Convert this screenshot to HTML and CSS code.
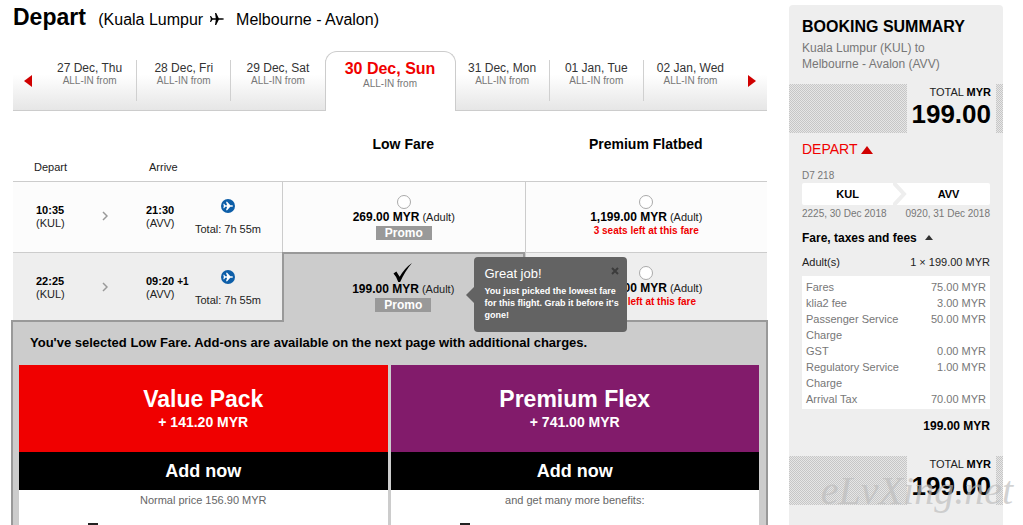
FILE: index.html
```
<!DOCTYPE html>
<html lang="en">
<head>
  <meta charset="UTF-8">
  <meta name="viewport" content="width=device-width, initial-scale=1.0">
  <title>Select flight</title>
  <link rel="stylesheet" href="styles.css">
</head>
<body>
  <svg class="defs" width="0" height="0">
    <symbol id="plane" viewBox="0 0 14 12">
      <path d="M0 3h1l1.500 2.300h3.300L5 0h1.200l2.600 5.300h3.400q1.800.2 1.800.7t-1.800.7H8.800L6.200 12H5l.8-5.300H2.500L1 9H0l.8-3z"/>
    </symbol>
    <symbol id="flight" viewBox="0 0 14 14">
      <circle cx="7" cy="7" r="7" fill="#0d5ea8"/>
      <path fill="#fff" d="M2.300 4.800h.9l1 1.400h1.900L5 2.800h1.200l3.100 3.400h1.500q1.300.2 1.300.8t-1.300.8H9.300l-3.100 3.400H5l1.100-3.400H4.200l-1 1.400h-.9L2.800 7z"/>
    </symbol>
    <symbol id="chevron" viewBox="0 0 6 10">
      <path d="M1 1l4 4-4 4" fill="none" stroke="#999" stroke-width="1.500"/>
    </symbol>
  </svg>

  <div class="page">
    <main class="flights">
      <h1 class="title">Depart
        <span class="route">(Kuala Lumpur <svg class="plane"><use href="#plane"/></svg> Melbourne - Avalon)</span>
      </h1>

      <!-- date tabs -->
      <nav class="dates">
        <button class="step" type="button" aria-label="Earlier"><svg width="8" height="12"><path d="M8 0v12L0 6z"/></svg></button>
        <a class="date" href="#">27 Dec, Thu<small>ALL-IN from</small></a>
        <a class="date" href="#">28 Dec, Fri<small>ALL-IN from</small></a>
        <a class="date" href="#">29 Dec, Sat<small>ALL-IN from</small></a>
        <a class="date active" href="#">30 Dec, Sun<small>ALL-IN from</small></a>
        <a class="date" href="#">31 Dec, Mon<small>ALL-IN from</small></a>
        <a class="date" href="#">01 Jan, Tue<small>ALL-IN from</small></a>
        <a class="date last" href="#">02 Jan, Wed<small>ALL-IN from</small></a>
        <button class="step" type="button" aria-label="Later"><svg width="8" height="12"><path d="M0 0v12l8-6z"/></svg></button>
      </nav>

      <table class="fares">
        <colgroup>
          <col class="col-depart"><col class="col-arrow"><col class="col-arrive"><col class="col-total"><col class="col-fare"><col class="col-fare">
        </colgroup>
        <thead>
          <tr>
            <th class="place">Depart</th>
            <th></th>
            <th class="place arrive">Arrive</th>
            <th></th>
            <th class="fare-name">Low Fare</th>
            <th class="fare-name">Premium Flatbed</th>
          </tr>
        </thead>
        <tbody>
          <tr>
            <td class="time"><b>10:35</b><br>(KUL)</td>
            <td class="arrow"><svg width="6" height="10"><use href="#chevron"/></svg></td>
            <td class="time"><b>21:30</b><br>(AVV)</td>
            <td class="total"><svg width="14" height="14"><use href="#flight"/></svg>Total: 7h 55m</td>
            <td class="fare">
              <label><input type="radio" name="fare"><span class="price"><b>269.00 MYR</b> (Adult)</span></label>
              <span class="promo">Promo</span>
            </td>
            <td class="fare">
              <label><input type="radio" name="fare"><span class="price"><b>1,199.00 MYR</b> (Adult)</span></label>
              <span class="seats">3 seats left at this fare</span>
            </td>
          </tr>
          <tr class="current">
            <td class="time"><b>22:25</b><br>(KUL)</td>
            <td class="arrow"><svg width="6" height="10"><use href="#chevron"/></svg></td>
            <td class="time"><b>09:20 <small>+1</small></b><br>(AVV)</td>
            <td class="total"><svg width="14" height="14"><use href="#flight"/></svg>Total: 7h 55m</td>
            <td class="fare selected">
              <label>
                <input type="radio" name="fare" checked>
                <svg class="tick" viewBox="0 0 20 20"><path d="M0 11l3-2 3.500 5.500Q12 5 19.500 0q-7 8-12.500 20H5Q3 14 0 11z"/></svg>
                <span class="price"><b>199.00 MYR</b> (Adult)</span>
              </label>
              <span class="promo">Promo</span>
              <div class="tip">
                <button class="close" type="button" aria-label="Close"><svg width="8" height="8"><path d="M1 1l6 6M7 1L1 7"/></svg></button>
                <strong>Great job!</strong>
                <p>You just picked the lowest fare for this flight. Grab it before it's gone!</p>
              </div>
            </td>
            <td class="fare">
              <label><input type="radio" name="fare"><span class="price"><b>1,199.00 MYR</b> (Adult)</span></label>
              <span class="seats">1 seat left at this fare</span>
            </td>
          </tr>
        </tbody>
      </table>

      <!-- add-ons -->
      <section class="addons">
        <p class="notice">You've selected Low Fare. Add-ons are available on the next page with additional charges.</p>
        <div class="packs">
          <article class="pack value">
            <header><h2>Value Pack</h2>+ 141.20 MYR</header>
            <button type="button">Add now</button>
            <p>Normal price 156.90 MYR</p>
            <svg class="bag" viewBox="0 0 24 24"><path d="M8 5V1h8v4M3 5h18v17H3z"/></svg>
          </article>
          <article class="pack flex">
            <header><h2>Premium Flex</h2>+ 741.00 MYR</header>
            <button type="button">Add now</button>
            <p>and get many more benefits:</p>
            <svg class="bag" viewBox="0 0 24 24"><path d="M8 5V1h8v4M3 5h18v17H3z"/></svg>
          </article>
        </div>
      </section>
    </main>

    <aside class="summary">
      <h2>BOOKING SUMMARY</h2>
      <p class="trip">Kuala Lumpur (KUL) to<br>Melbourne - Avalon (AVV)</p>
      <div class="band"><div class="sum">TOTAL <b>MYR</b><strong>199.00</strong></div></div>

      <div class="details">
        <h3 class="leg">DEPART <svg width="12" height="8"><path d="M6 0l6 8H0z"/></svg></h3>
        <p class="small">D7 218</p>
        <div class="stations">
          <span class="from">KUL</span>
          <svg width="14" height="22" viewBox="0 0 14 22"><path d="M0-1l11 12L0 23" fill="none" stroke="#eee" stroke-width="4"/></svg>
          <span class="to">AVV</span>
        </div>
        <p class="small line"><span>2225, 30 Dec 2018</span><span>0920, 31 Dec 2018</span></p>
        <h4>Fare, taxes and fees <svg width="8" height="5"><path d="M4 0l4 5H0z"/></svg></h4>
        <p class="line adults"><span>Adult(s)</span><span>1 × 199.00 MYR</span></p>
        <table class="fees">
          <tr><td>Fares</td><td>75.00 MYR</td></tr>
          <tr><td>klia2 fee</td><td>3.00 MYR</td></tr>
          <tr><td>Passenger Service Charge</td><td>50.00 MYR</td></tr>
          <tr><td>GST</td><td>0.00 MYR</td></tr>
          <tr><td>Regulatory Service Charge</td><td>1.00 MYR</td></tr>
          <tr><td>Arrival Tax</td><td>70.00 MYR</td></tr>
        </table>
        <p class="subtotal">199.00 MYR</p>
      </div>
      <div class="band"><div class="sum">TOTAL <b>MYR</b><strong>199.00</strong></div></div>
      <span class="watermark">eLvXing.net</span>
    </aside>
  </div>
</body>
</html>
```
FILE: styles.css
```
* {
  box-sizing: border-box;
}
body {
  margin: 0;
  background: #fff;
  color: #222;
  font: 11px/13px "Liberation Sans", Arial, sans-serif;
}
h1, h2, h3, h4, p {
  margin: 0;
}
button {
  border: 0;
  padding: 0;
  background: none;
  font-family: inherit;
  cursor: pointer;
}
.defs {
  position: absolute;
}

.page {
  display: flex;
  gap: 22px;
  height: 100vh;
  overflow: hidden;
  padding: 5px 20px 0 13px;
}
.flights {
  flex: 1;
  min-width: 0;
}

.title {
  height: 46px;
  color: #000;
  font-size: 23px;
  line-height: 24px;
}
.route {
  margin-left: 6px;
  font-size: 16px;
  font-weight: normal;
}
.plane {
  width: 14px;
  height: 12px;
  margin: 0 8px 0 2px;
}

/* date tabs */
.dates {
  display: flex;
  height: 60px;
  border-bottom: 1px solid #ccc;
  background: linear-gradient(#fff 40%, #e6e6e6);
}
.step {
  flex: none;
  width: 30px;
  padding-top: 4px;
  fill: #d00000;
}
.date {
  flex: 1;
  margin: 9px 0;
  border-right: 1px solid #d0d0d0;
  padding-top: 1px;
  color: #333;
  font-size: 12px;
  line-height: 14px;
  text-align: center;
  text-decoration: none;
}
.date small {
  display: block;
  color: #777;
  font-size: 10px;
  line-height: 11px;
}
.date.last {
  border-right: 0;
}
.date.active {
  flex: none;
  width: 131px;
  margin: 0 0 -1px -1px;
  border: 1px solid #ccc;
  border-bottom: 0;
  border-radius: 12px 12px 0 0;
  padding-top: 8px;
  background: #fff;
  color: #f00000;
  font-size: 16px;
  font-weight: bold;
  line-height: 18px;
}
.date.active small {
  font-weight: normal;
}

/* fares */
.fares {
  position: relative;
  z-index: 1;
  width: 100%;
  margin-bottom: -2px;
  border-spacing: 0;
  table-layout: fixed;
}
.col-depart { width: 74px; }
.col-arrow { width: 36px; }
.col-arrive { width: 65px; }
.col-total { width: 94px; }

.fares th {
  height: 70px;
  padding: 0;
  text-align: left;
  vertical-align: bottom;
}
.fares th.place {
  padding: 0 0 7px 21px;
  font-weight: normal;
}
.fares th.arrive {
  padding-left: 26px;
}
.fares th.fare-name {
  padding-bottom: 29px;
  color: #000;
  font-size: 14px;
  line-height: 16px;
  text-align: center;
}
.fares td {
  height: 71px;
  border-top: 1px solid #ccc;
  padding: 0;
  background: #fcfcfc;
  vertical-align: top;
}
.fares .current td {
  height: 70px;
  border-bottom: 2px solid #999;
  background: #eee;
}
.fares td.time {
  padding: 22px 0 0 23px;
  white-space: nowrap;
}
.time b {
  color: #000;
}
.time small {
  font-size: 10px;
}
.fares td.arrow {
  padding-top: 29px;
  text-align: center;
}
.fares td.total {
  padding: 17px 14px 0 0;
  text-align: center;
  white-space: nowrap;
}
.total svg {
  display: block;
  margin: 0 auto 10px;
}
.fares td.fare {
  position: relative;
  border-left: 1px solid #ccc;
  padding-top: 13px;
  text-align: center;
}
.fare label,
.price,
.seats {
  display: block;
}
.fare input {
  display: block;
  appearance: none;
  width: 14px;
  height: 14px;
  margin: 0 auto 1px;
  border: 1px solid #aaa;
  border-radius: 50%;
  background: #fff;
}
.price {
  line-height: 14px;
}
.price b {
  color: #000;
  font-size: 12px;
}
.seats {
  color: #f00000;
  font-size: 10px;
  font-weight: bold;
}
.promo {
  display: inline-block;
  margin-top: 2px;
  padding: 0 9px;
  background: #999;
  color: #fff;
  font-size: 12px;
  font-weight: bold;
  line-height: 14px;
}
.fares .current td.selected {
  border: solid #999;
  border-width: 2px 2px 0;
  padding-top: 9px;
  background: #ccc;
}
.selected input {
  position: absolute;
  opacity: 0;
}
.tick {
  display: block;
  width: 20px;
  height: 19px;
  margin: 0 auto;
}

.tip {
  position: absolute;
  z-index: 2;
  top: 3px;
  left: 100%;
  width: 153px;
  margin-left: -49px;
  border-radius: 4px;
  padding: 9px 0 11px 11px;
  background: #636363;
  color: #fff;
  font-size: 9px;
  font-weight: bold;
  line-height: 12px;
  text-align: left;
}
.tip::before {
  content: "";
  position: absolute;
  top: 30px;
  left: -8px;
  border: solid transparent;
  border-width: 8px 8px 8px 0;
  border-right-color: #636363;
}
.tip strong {
  display: block;
  margin-bottom: 3px;
  font-size: 13px;
  font-weight: normal;
  line-height: 16px;
}
.close {
  position: absolute;
  top: 10px;
  right: 8px;
  line-height: 8px;
}
.close path {
  stroke: #3c3c3c;
  stroke-width: 2;
}

/* add-ons */
.addons {
  margin: 0 -1px 0 -2px;
  border: 2px solid #999;
  padding: 13px 7px 0 6px;
  background: #ccc;
}
.notice {
  padding: 0 11px;
  color: #000;
  font-size: 13px;
  font-weight: bold;
  line-height: 16px;
}
.packs {
  display: flex;
  gap: 3px;
  margin-top: 14px;
}
.pack {
  flex: 1;
  background: #fff;
  color: #666;
  text-align: center;
}
.pack header {
  height: 87px;
  padding-top: 21px;
  background: #f00000;
  color: #fff;
  font-size: 14px;
  font-weight: bold;
  line-height: 18px;
}
.pack h2 {
  font-size: 23px;
  line-height: 27px;
}
.flex header {
  background: #821b6b;
}
.pack button {
  width: 100%;
  height: 38px;
  background: #000;
  color: #fff;
  font-size: 18px;
  font-weight: bold;
}
.pack p {
  padding: 4px 0;
}
.bag {
  display: block;
  width: 24px;
  height: 24px;
  margin: 12px 62px;
  fill: none;
  stroke: #222;
  stroke-width: 2;
}

/* booking summary */
.summary {
  position: relative;
  flex: none;
  width: 214px;
  border-radius: 4px 4px 0 0;
  padding-top: 12px;
  background: #eee;
}
.summary h2 {
  padding: 0 13px;
  color: #000;
  font-size: 16px;
  line-height: 20px;
}
.trip {
  padding: 3px 13px 12px;
  color: #777;
  font-size: 12px;
  line-height: 16px;
}
.band {
  display: flex;
  justify-content: flex-end;
  padding-right: 7px;
  background: conic-gradient(#c6c6c6 25%, #e6e6e6 0 50%, #c6c6c6 0 75%, #e6e6e6 0) 0 0 / 2px 2px;
}
.sum {
  width: 89px;
  height: 49px;
  padding: 2px 5px 0 0;
  background: #eee;
  text-align: right;
}
.sum b {
  color: #000;
}
.sum strong {
  display: block;
  color: #000;
  font-size: 26px;
  line-height: 31px;
}
.details {
  padding: 8px 13px 0;
}
.leg {
  color: #f00000;
  font-size: 14px;
  font-weight: normal;
  line-height: 16px;
}
.leg path {
  fill: #d00000;
}
.small {
  margin-top: 12px;
  color: #777;
  font-size: 10px;
  line-height: 13px;
}
.stations {
  display: flex;
  margin-top: 1px;
  border-radius: 2px;
  background: #fff;
  color: #000;
  font-weight: bold;
  line-height: 22px;
  text-align: center;
}
.from {
  flex: 11;
}
.to {
  flex: 10;
}
.line {
  display: flex;
  justify-content: space-between;
}
.small.line {
  margin-top: 2px;
}
.details h4 {
  margin-top: 10px;
  color: #000;
  font-size: 12px;
  line-height: 16px;
}
.details h4 svg {
  margin: 0 0 2px 5px;
  fill: #333;
}
.adults {
  margin: 10px 0 7px;
}
.fees {
  width: 100%;
  border-spacing: 0;
  padding: 3px 4px 2px;
  background: #fff;
  color: #777;
  line-height: 16px;
}
.fees td {
  padding: 0;
  vertical-align: top;
}
.fees td:last-child {
  text-align: right;
  white-space: nowrap;
}
.subtotal {
  padding: 9px 0 22px;
  color: #000;
  font-size: 12px;
  font-weight: bold;
  line-height: 16px;
  text-align: right;
}
.watermark {
  position: absolute;
  right: -10px;
  top: 464px;
  color: rgba(190, 190, 190, .7);
  font: italic 40px/44px "Liberation Serif", cursive;
}
```
